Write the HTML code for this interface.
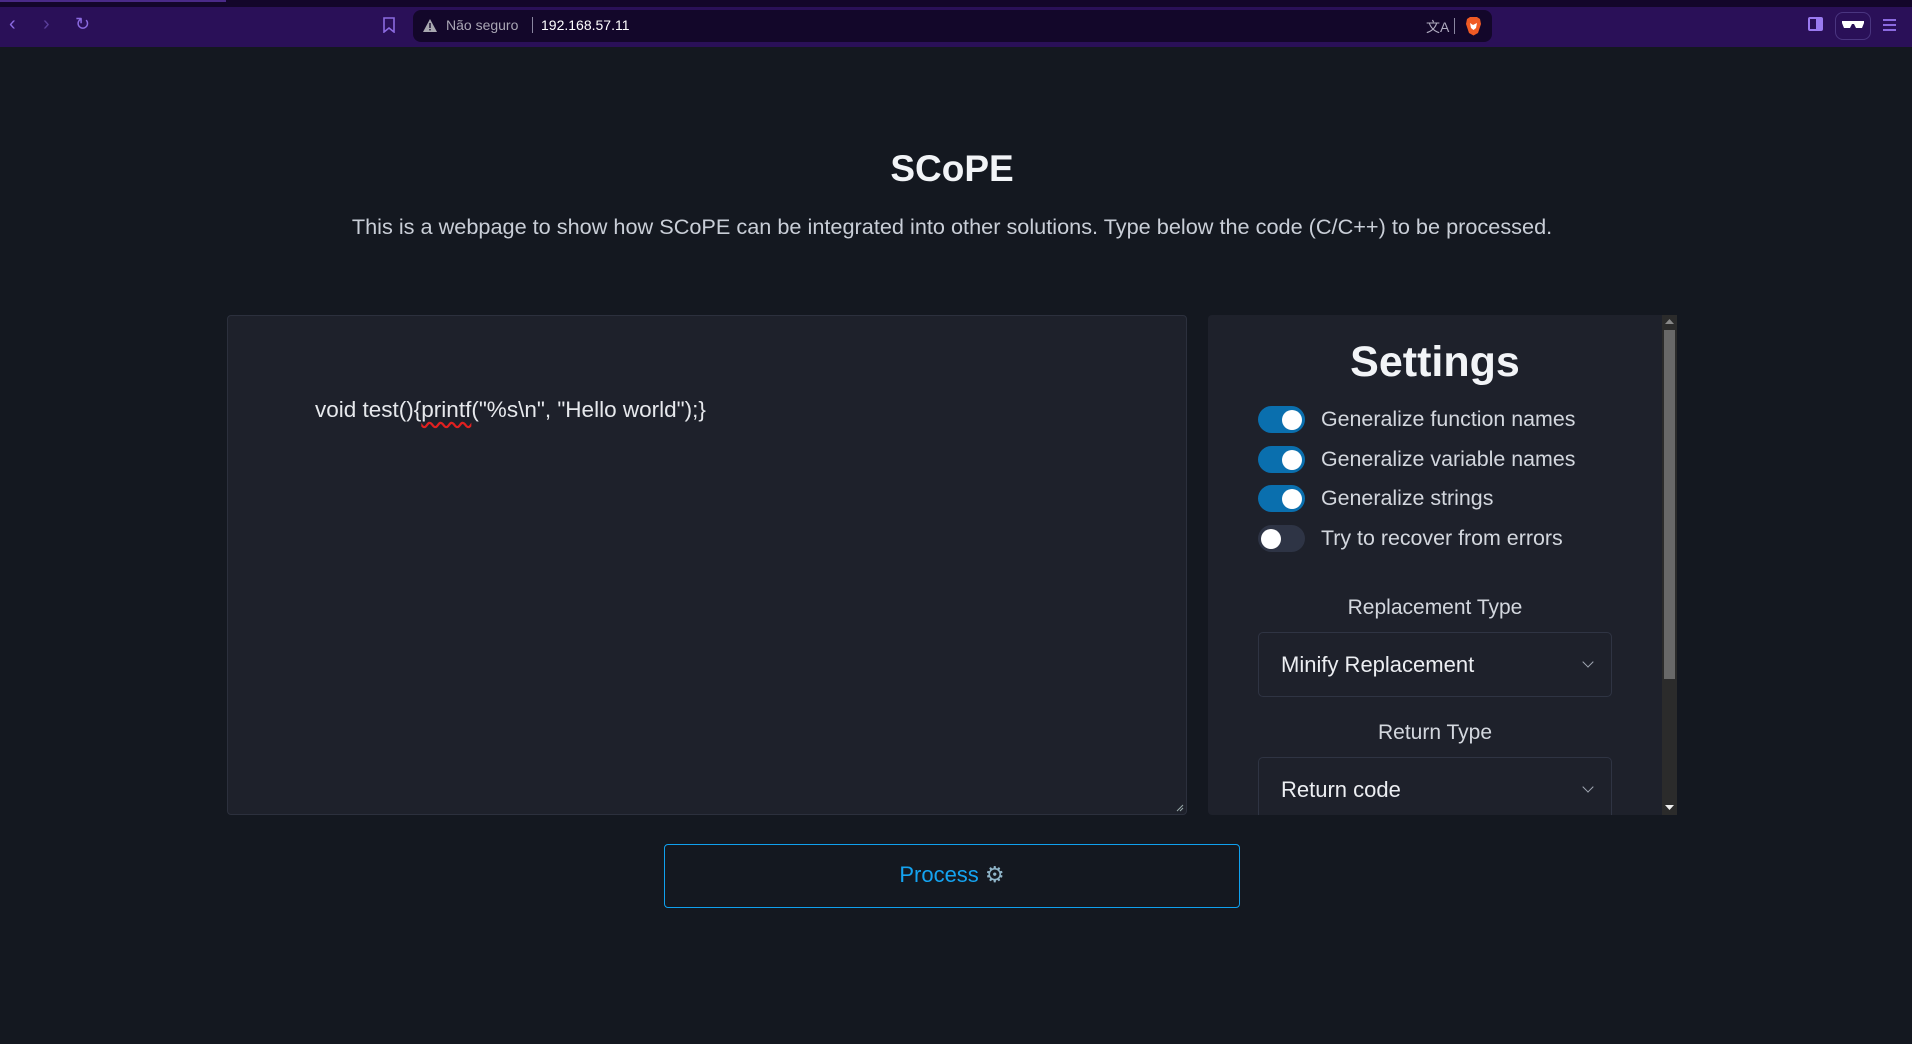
<!DOCTYPE html>
<html><head><meta charset="utf-8"><style>
*{margin:0;padding:0;box-sizing:border-box}
body{width:1912px;height:1044px;background:#141820;font-family:"Liberation Sans",sans-serif;color:#d3d7de;position:relative;overflow:hidden}
.abs{position:absolute}
.top{left:0;top:0;width:1912px;height:7px;background:#13062a}
.tab{left:0;top:0;width:226px;height:2px;background:#4a2a88}
.bar{left:0;top:7px;width:1912px;height:40px;background:#2a1058}
.url{left:413px;top:10px;width:1079px;height:32px;background:#13072a;border-radius:8px}
.ico{color:#8b6ae0;font-size:18px;line-height:1}
.t{white-space:nowrap}
.panel{background:#1e212b;border-radius:4px}
.tg{position:absolute;left:1258px;width:47px;height:27px;border-radius:14px;background:#0a6fae}
.tg::after{content:"";position:absolute;top:3.5px;left:24px;width:20px;height:20px;border-radius:50%;background:#fff}
.tg.off{background:#2e3445}
.tg.off::after{left:3px}
.lbl{position:absolute;left:1321px;font-size:21.4px;color:#d3d7de;white-space:nowrap;line-height:26px}
.sel{position:absolute;left:1258px;width:354px;height:65px;border:1px solid #2f3443;border-radius:5px}
.sel span{position:absolute;left:22px;top:19px;font-size:22px;color:#eceef2}
.chev{position:absolute;left:325px;top:25px;width:8px;height:8px;border-right:1.5px solid #a0a6b2;border-bottom:1.5px solid #a0a6b2;transform:rotate(45deg)}
</style></head><body>
<div class="abs top"></div><div class="abs tab"></div>
<div class="abs bar"></div>
<div class="abs ico" style="left:9px;top:14px;font-size:20px">&#x2039;</div>
<div class="abs ico" style="left:43px;top:14px;font-size:20px;color:#5a3e9a">&#x203A;</div>
<div class="abs ico" style="left:75px;top:15px;">&#x21bb;</div>
<svg class="abs" style="left:383px;top:17px" width="12" height="16"><path d="M1 1h10v14l-5-4-5 4z" fill="none" stroke="#8b6ae0" stroke-width="1.6"/></svg>
<div class="abs url"></div>
<svg class="abs" style="left:423px;top:19px" width="14" height="13"><path d="M7 0L14 13H0z" fill="#a8a8b0"/><rect x="6.3" y="4" width="1.4" height="5" fill="#13072a"/><rect x="6.3" y="10" width="1.4" height="1.4" fill="#13072a"/></svg>
<div class="abs t" style="left:446px;top:17px;font-size:14px;color:#a9a6b4">Não seguro</div>
<div class="abs" style="left:532px;top:17px;width:1px;height:16px;background:#8a86a0"></div>
<div class="abs t" style="left:541px;top:17px;font-size:14px;color:#fff">192.168.57.11</div>
<div class="abs t" style="left:1426px;top:17px;font-size:14px;color:#b0acc0">文A</div>
<div class="abs" style="left:1454px;top:18px;width:1px;height:16px;background:#8a86a0"></div>
<svg class="abs" style="left:1465px;top:16px" width="17" height="20"><path d="M2 3L5 1h7l3 2 1 5-3 9-4.5 2.5L4 17 1 8z" fill="#f05a24"/><path d="M5 7l3 2 4-2-1 5-2.5 2-2.5-2z" fill="#fff"/></svg>
<div class="abs" style="left:1808px;top:17px;width:15px;height:14px;border:2px solid #9a7af0;border-radius:2px"><div style="position:absolute;right:0;top:0;width:5px;height:10px;background:#9a7af0"></div></div>
<div class="abs" style="left:1835px;top:12px;width:36px;height:28px;border:1px solid #4a3580;border-radius:8px"></div>
<svg class="abs" style="left:1842px;top:20px" width="22" height="10"><path d="M0 1h22v2l-2 5h-6l-2-4h-2l-2 4H2L0 3z" fill="#fff"/></svg>
<div class="abs" style="left:1883px;top:19px;width:13px;height:2px;background:#8b6ae0;box-shadow:0 5px 0 #8b6ae0,0 10px 0 #8b6ae0"></div>

<div class="abs t" style="left:0;width:1904px;text-align:center;top:148px;font-size:37px;font-weight:bold;color:#f2f4f7">SCoPE</div>
<div class="abs t" style="left:0;width:1904px;text-align:center;top:214px;font-size:21.7px;color:#c9ced7">This is a webpage to show how SCoPE can be integrated into other solutions. Type below the code (C/C++) to be processed.</div>

<div class="abs panel" style="left:227px;top:315px;width:960px;height:500px;border:1px solid #2c303d"></div>
<div class="abs t" style="left:315px;top:397px;font-size:22.5px;color:#e6e8ec">void test(){<span style="text-decoration:underline wavy #e02020;text-underline-offset:4px">printf</span>("%s\n", "Hello world");}</div>
<svg class="abs" style="left:1176px;top:804px" width="8" height="8"><path d="M1 7L7 1M4 7L7 4" stroke="#9aa" stroke-width="1"/></svg>

<div class="abs panel" style="left:1208px;top:315px;width:469px;height:500px"></div>
<div class="abs t" style="left:1208px;width:454px;text-align:center;top:338px;font-size:43px;font-weight:bold;color:#f2f4f7">Settings</div>
<div class="tg" style="top:406px"></div><div class="lbl" style="top:406px">Generalize function names</div>
<div class="tg" style="top:446px"></div><div class="lbl" style="top:446px">Generalize variable names</div>
<div class="tg" style="top:485px"></div><div class="lbl" style="top:485px">Generalize strings</div>
<div class="tg off" style="top:525px"></div><div class="lbl" style="top:525px">Try to recover from errors</div>
<div class="abs t" style="left:1208px;width:454px;text-align:center;top:596px;font-size:21px">Replacement Type</div>
<div class="sel" style="top:632px"><span>Minify Replacement</span><div class="chev"></div></div>
<div class="abs t" style="left:1208px;width:454px;text-align:center;top:721px;font-size:21px">Return Type</div>
<div style="position:absolute;left:1208px;top:757px;width:454px;height:58px;overflow:hidden"><div class="sel" style="top:0;left:50px;height:80px"><span>Return code</span><div class="chev"></div></div></div>
<div class="abs" style="left:1662px;top:315px;width:15px;height:500px;background:#2b2b2b"></div>
<div class="abs" style="left:1664px;top:330px;width:11px;height:349px;background:#686868"></div>
<svg class="abs" style="left:1665px;top:318px" width="9" height="6"><path d="M0 6L4.5 1 9 6z" fill="#888"/></svg>
<svg class="abs" style="left:1665px;top:805px" width="9" height="6"><path d="M0 0L4.5 5 9 0z" fill="#eee"/></svg>

<div class="abs" style="left:664px;top:844px;width:576px;height:64px;border:1.5px solid #10a0ee;border-radius:4px"></div>
<div class="abs t" style="left:664px;width:576px;text-align:center;top:862px;font-size:22px;color:#14a3f0">Process <span style="color:#8fb4c8">⚙</span></div>
</body></html>
